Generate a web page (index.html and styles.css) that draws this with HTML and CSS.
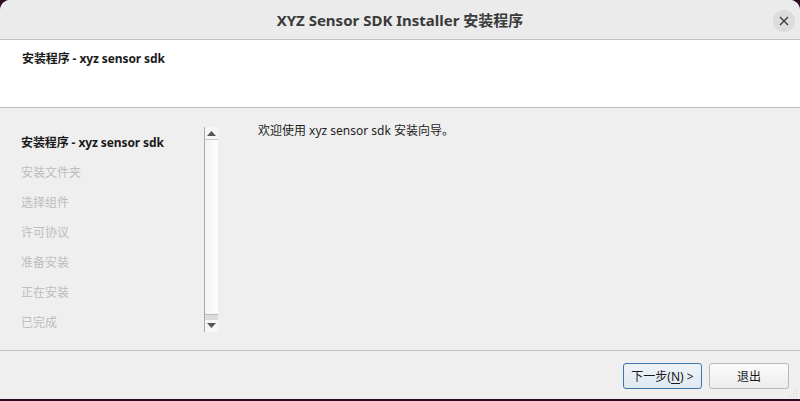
FILE: index.html
```html
<!DOCTYPE html>
<html lang="zh">
<head>
<meta charset="utf-8">
<title>XYZ Sensor SDK Installer</title>
<link rel="stylesheet" href="styles.css">
</head>
<body>
<div class="window">
  <div class="titlebar">
    <div class="title">XYZ Sensor SDK Installer 安装程序</div>
    <button class="close" aria-label="close">
      <svg width="10" height="10" viewBox="0 0 10 10"><path d="M1 1 L9 9 M9 1 L1 9" stroke="#3a3a3a" stroke-width="1.3" fill="none"/></svg>
    </button>
  </div>
  <div class="header">安装程序 - xyz sensor sdk</div>
  <div class="main">
    <div class="side">
      <ul class="steps">
        <li class="current">安装程序 - xyz sensor sdk</li>
        <li>安装文件夹</li>
        <li>选择组件</li>
        <li>许可协议</li>
        <li>准备安装</li>
        <li>正在安装</li>
        <li>已完成</li>
      </ul>
      <div class="scrollbar">
        <div class="arrow up"><svg width="9" height="5" viewBox="0 0 9 5"><path d="M0 5 L4.5 0 L9 5 Z" fill="#555"/></svg></div>
        <div class="track"></div>
        <div class="arrow down"><svg width="9" height="5" viewBox="0 0 9 5"><path d="M0 0 L9 0 L4.5 5 Z" fill="#555"/></svg></div>
      </div>
    </div>
    <div class="content">欢迎使用 xyz sensor sdk 安装向导。</div>
  </div>
  <div class="footer">
    <button class="btn default">下一步(<u>N</u>) &gt;</button>
    <button class="btn">退出</button>
    <svg class="grip" width="9" height="9" viewBox="0 0 9 9">
      <g fill="#c4c4c4">
        <rect x="7" y="1" width="1" height="1"/>
        <rect x="4" y="4" width="1" height="1"/><rect x="7" y="4" width="1" height="1"/>
        <rect x="1" y="7" width="1" height="1"/><rect x="4" y="7" width="1" height="1"/><rect x="7" y="7" width="1" height="1"/>
      </g>
    </svg>
  </div>
</div>
</body>
</html>
```

FILE: styles.css
```css
* { box-sizing: border-box; }
html, body {
  margin: 0;
  padding: 0;
  background: #2c0b22;
  width: 800px;
  height: 401px;
  overflow: hidden;
}
body {
  font-family: "Noto Sans", "Noto Sans CJK SC", sans-serif;
  font-size: 12px;
  color: #1e1e1e;
}
.window {
  width: 800px;
  height: 399px;
  background: #efefef;
  border-radius: 10px 10px 0 0;
  overflow: hidden;
  display: flex;
  flex-direction: column;
}
.titlebar {
  height: 40px;
  flex: none;
  background: #ebebeb;
  border-bottom: 1px solid #c2c2c2;
  position: relative;
  display: flex;
  align-items: center;
  justify-content: center;
}
.title {
  font-family: "Noto Sans", "Noto Sans CJK SC", sans-serif;
  font-weight: bold;
  font-size: 15px;
  color: #3a3a3a;
  margin-top: -1px;
}
.close {
  position: absolute;
  right: 5px;
  top: 10px;
  width: 22px;
  height: 22px;
  border-radius: 50%;
  border: none;
  background: #dcdcdc;
  padding: 0;
  display: flex;
  align-items: center;
  justify-content: center;
}
.header {
  height: 68px;
  flex: none;
  background: #ffffff;
  border-bottom: 1px solid #bcbcbc;
  padding: 10px 0 0 22px;
  font-weight: bold;
  font-size: 12px;
  color: #1a1a1a;
  line-height: 18px;
  letter-spacing: -0.1px;
}
.main {
  height: 243px;
  flex: none;
  border-bottom: 1px solid #c4c4c4;
  display: flex;
}
.side {
  display: flex;
  margin: 19px 0 0 21px;
  height: 205px;
}
.steps {
  list-style: none;
  margin: 0;
  padding: 1px 0 0 0;
  width: 183px;
}
.steps li {
  height: 30px;
  line-height: 30px;
  color: #bdbdbd;
  white-space: nowrap;
}
.steps li.current {
  color: #1a1a1a;
  font-weight: bold;
  letter-spacing: -0.1px;
}
.scrollbar {
  width: 14px;
  border-left: 1px solid #a9a9a9;
  display: flex;
  flex-direction: column;
  background: linear-gradient(to right, #f3f3f3, #fdfdfd);
}
.arrow {
  height: 13px;
  display: flex;
  align-items: center;
  justify-content: center;
  background: #f6f6f6;
}
.arrow.up { border-bottom: 1px solid #c8c8c8; }
.arrow.down {
  height: 18px;
  border-top: 1px solid #bdbdbd;
  background: linear-gradient(#dcdcdc 0, #dcdcdc 5px, #f6f6f6 5px);
  align-items: flex-start;
  padding-top: 8px;
}
.track { flex: 1; }
.content {
  margin: 14px 0 0 40px;
  line-height: 18px;
  color: #1e1e1e;
}
.footer {
  flex: 1;
  display: flex;
  justify-content: flex-end;
  align-items: flex-start;
  padding: 12px 11px 0 0;
  gap: 7px;
  position: relative;
}
.btn {
  width: 80px;
  height: 26px;
  font-family: "Noto Sans", "Noto Sans CJK SC", sans-serif;
  font-size: 12px;
  color: #1a1a1a;
  border: 1px solid #b9b9b9;
  border-radius: 3px;
  background: linear-gradient(#fbfbfb, #ececec);
  padding: 0;
}
.btn.default {
  width: 79px;
  border-color: #3b77ae;
  background: linear-gradient(#eef3f8, #dfe8f1);
}
.btn u { text-underline-offset: 2px; }
.grip {
  position: absolute;
  right: 2px;
  bottom: 1px;
}
```
